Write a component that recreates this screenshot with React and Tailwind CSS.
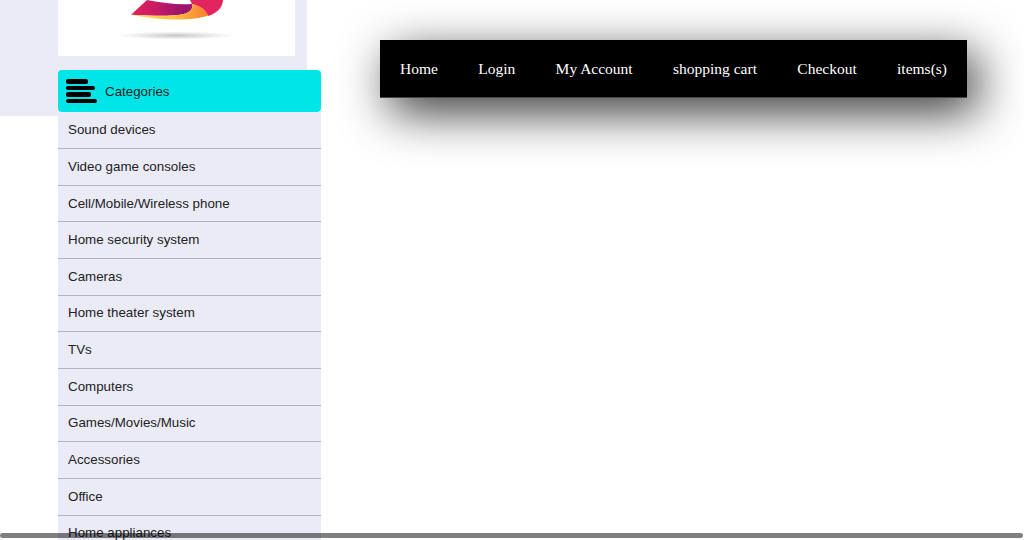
import React from 'react';

const categories = [
  'Sound devices',
  'Video game consoles',
  'Cell/Mobile/Wireless phone',
  'Home security system',
  'Cameras',
  'Home theater system',
  'TVs',
  'Computers',
  'Games/Movies/Music',
  'Accessories',
  'Office',
  'Home appliances',
];

const navLinks = ['Home', 'Login', 'My Account', 'shopping cart', 'Checkout', 'items(s)'];

const Logo = () => (
  <svg width="237" height="56" viewBox="0 0 237 56">
    <defs>
      <linearGradient id="pink" x1="0" y1="0" x2="1" y2="0">
        <stop offset="0" stopColor="#e0245e" />
        <stop offset="0.4" stopColor="#c91c66" />
        <stop offset="0.85" stopColor="#98136f" />
        <stop offset="1" stopColor="#a3156f" />
      </linearGradient>
      <linearGradient id="orange" x1="0" y1="0" x2="1" y2="0">
        <stop offset="0" stopColor="#fbe36a" />
        <stop offset="0.55" stopColor="#fdc23e" />
        <stop offset="1" stopColor="#f97c30" />
      </linearGradient>
      <radialGradient id="floor">
        <stop offset="0" stopColor="#c8c8c8" />
        <stop offset="1" stopColor="#ffffff" />
      </radialGradient>
    </defs>
    <path d="M165 0 L132 0 L134 4 C142 6 148 10 150 16 C160 13 165 6 165 0 Z" fill="#e2245f" />
    <path d="M89 0 L73 14.7 C95 16 112 16 120 15 C130 14 136 10 134 4 C120 5 105 3 89 0 Z" fill="url(#pink)" />
    <path d="M73 14.7 C95 16 112 16 120 15 C130 14 136 10 134 4 C142 6 148 10 150 15.5 C135 21 105 21 73 14.7 Z" fill="url(#orange)" />
    <ellipse cx="118" cy="35.5" rx="58" ry="4" fill="url(#floor)" />
  </svg>
);

const CategoriesIcon = () => (
  <div className="flex w-[31px] flex-col gap-[2.2px]">
    <span className="block h-[4.3px] w-[22px] rounded-[2px] bg-black" />
    <span className="block h-[4.3px] w-[29px] rounded-[2px] bg-black" />
    <span className="block h-[4.3px] w-[25px] rounded-[2px] bg-black" />
    <span className="block h-[4.3px] w-[31px] rounded-[2px] bg-black" />
  </div>
);

const Sidebar = () => (
  <div className="ml-[58px] -mt-[46px] w-[263px] font-['Liberation_Sans',sans-serif] text-[13.35px] text-[#222222]">
    <div className="flex h-[42.4px] items-center gap-[8px] rounded-[4px] bg-[#00e6e8] pl-[8px]">
      <CategoriesIcon />
      <span className="pt-[1px]">Categories</span>
    </div>
    <ul className="bg-[#ebebf7]">
      {categories.map((name) => (
        <li
          key={name}
          className="flex h-[36.67px] items-center border-b border-[#b4b4bd] pl-[10px]"
        >
          {name}
        </li>
      ))}
    </ul>
  </div>
);

const Nav = () => (
  <nav className="mt-[40px] ml-[59px] flex h-[57.5px] w-[587px] items-center justify-between border-b border-[#444444] bg-black px-[20px] pt-[1px] font-['Liberation_Serif',serif] text-[15.5px] text-white shadow-[10px_14px_48px_rgba(0,0,0,0.8)]">
    {navLinks.map((link) => (
      <a key={link} href="#" className="whitespace-nowrap">
        {link}
      </a>
    ))}
  </nav>
);

export default function App() {
  return (
    <div className="relative flex h-[540px] w-[1024px] overflow-hidden bg-white">
      <div className="w-[321px] shrink-0">
        <div className="h-[116px] w-[307px] bg-[#ebebf7] pl-[58px]">
          <div className="h-[56px] w-[237px] bg-white">
            <Logo />
          </div>
        </div>
        <Sidebar />
      </div>
      <Nav />
      {/* scrollbar sits over the page */}
      <div className="absolute bottom-[2px] left-0 h-[5px] w-[1023px] rounded-full bg-black/50" />
    </div>
  );
}
